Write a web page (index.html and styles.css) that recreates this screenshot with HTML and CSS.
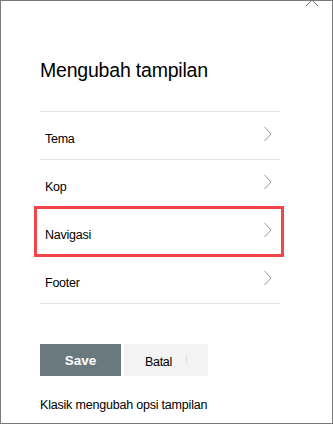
FILE: index.html
```html
<!DOCTYPE html>
<html lang="id">
<head>
    <meta charset="UTF-8">
    <meta name="viewport" content="width=device-width, initial-scale=1.0">
    <title>Mengubah tampilan</title>
    <link rel="stylesheet" href="styles.css">
</head>
<body>
    <div class="panel">
        <svg class="close" width="14" height="8" viewBox="0 0 14 8">
            <path d="M7 0 L1 6 M7 0 L13 6" stroke="#6e6e6e" stroke-width="1" fill="none"/>
        </svg>

        <h2 class="title">Mengubah tampilan</h2>

        <div class="menu">
            <div class="row">
                <span class="label">Tema</span>
                <svg class="chev" width="9" height="16" viewBox="0 0 9 16"><polyline points="1.5,1 8,8 1.5,15" fill="none" stroke="#9a9a9a" stroke-width="1"/></svg>
            </div>
            <div class="row">
                <span class="label">Kop</span>
                <svg class="chev" width="9" height="16" viewBox="0 0 9 16"><polyline points="1.5,1 8,8 1.5,15" fill="none" stroke="#9a9a9a" stroke-width="1"/></svg>
            </div>
            <div class="row highlight">
                <span class="label">Navigasi</span>
                <svg class="chev" width="9" height="16" viewBox="0 0 9 16"><polyline points="1.5,1 8,8 1.5,15" fill="none" stroke="#9a9a9a" stroke-width="1"/></svg>
            </div>
            <div class="row">
                <span class="label">Footer</span>
                <svg class="chev" width="9" height="16" viewBox="0 0 9 16"><polyline points="1.5,1 8,8 1.5,15" fill="none" stroke="#9a9a9a" stroke-width="1"/></svg>
            </div>
        </div>

        <div class="actions">
            <button class="btn-save">Save</button>
            <button class="btn-cancel">Batal<span class="caret"></span></button>
        </div>

        <div class="classic">Klasik mengubah opsi tampilan</div>
    </div>
</body>
</html>
```

FILE: styles.css
```css
body {
    margin: 0;
    font-family: "Liberation Sans", Arial, sans-serif;
    color: #000;
    background-color: #fff;
}
.panel {
    position: relative;
    width: 333px;
    height: 424px;
    box-sizing: border-box;
    border: 1px solid #7a7a7a;
    padding: 55px 52px 0 39px;
}
.close {
    position: absolute;
    top: -1px;
    left: 304px;
}
.title {
    margin: 0 0 27px 0;
    font-size: 19.5px;
    font-weight: normal;
    line-height: 28px;
    letter-spacing: -0.2px;
}
.menu {
    border-top: 1px solid #e3e3e3;
}
.row {
    position: relative;
    display: flex;
    align-items: center;
    justify-content: space-between;
    height: 47px;
    border-bottom: 1px solid #e3e3e3;
    padding: 0 8px 0 5px;
}
.label {
    margin-top: 7px;
    font-size: 12.5px;
    line-height: 16px;
    letter-spacing: -0.25px;
}
.chev {
    margin-top: -3px;
}
.highlight::after {
    content: "";
    position: absolute;
    left: -6px;
    right: -4px;
    top: -2px;
    bottom: -2px;
    border: 3px solid #f2454a;
}
.actions {
    display: flex;
    gap: 3px;
    margin-top: 40px;
}
.actions button {
    height: 32px;
    border: none;
    padding: 0;
    font-family: "Liberation Sans", Arial, sans-serif;
    cursor: pointer;
}
.btn-save {
    width: 81px;
    background-color: #69797e;
    color: #fff;
    font-size: 13.5px;
    font-weight: bold;
    padding-bottom: 3px;
}
.btn-cancel {
    display: flex;
    align-items: center;
    width: 84px;
    background-color: #f3f3f3;
    color: #000;
    font-size: 12.5px;
    letter-spacing: -0.3px;
    padding: 3px 0 0 21px !important;
}
.caret {
    display: inline-block;
    width: 1px;
    height: 8px;
    margin: -5px 0 0 14px;
    background-color: #dcdcdc;
}
.classic {
    margin-top: 21px;
    font-size: 12.5px;
    line-height: 16px;
    letter-spacing: -0.2px;
}
```
